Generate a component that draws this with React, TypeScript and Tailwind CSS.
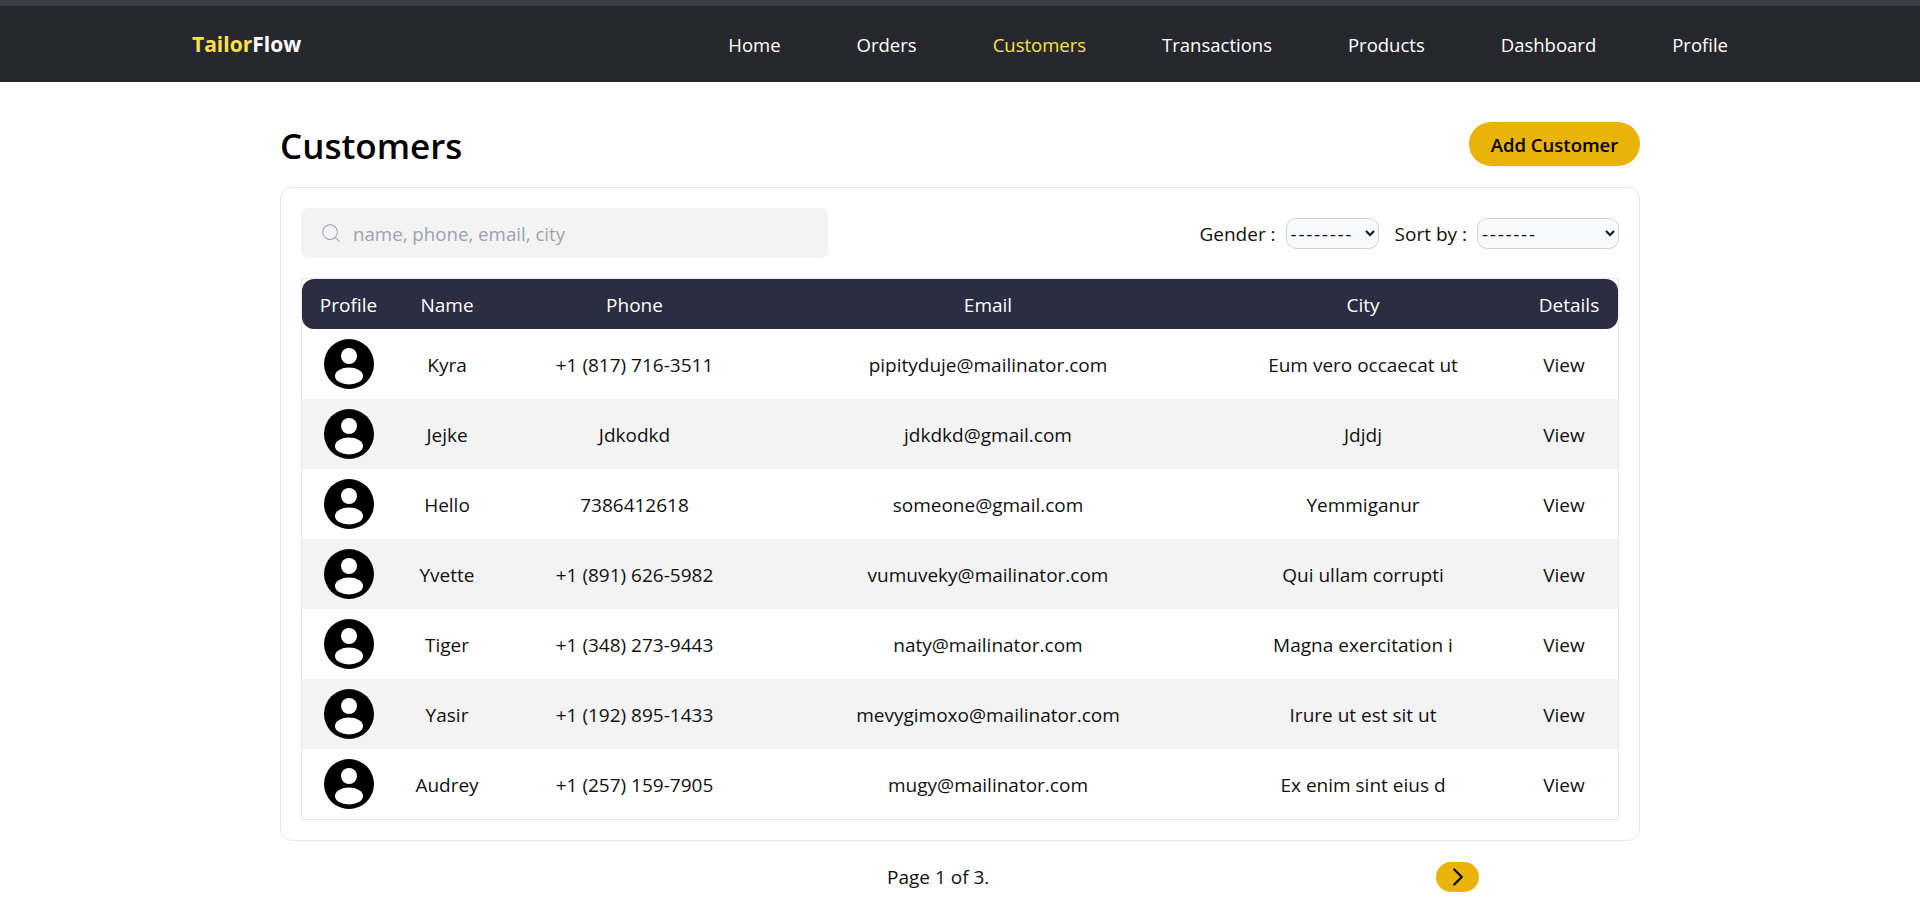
import { ChevronRight, Search } from 'lucide-react'

const NAV_LINKS = ['Home', 'Orders', 'Customers', 'Transactions', 'Products', 'Dashboard', 'Profile']

const CUSTOMERS = [
  { name: 'Kyra', phone: '+1 (817) 716-3511', email: 'pipityduje@mailinator.com', city: 'Eum vero occaecat ut' },
  { name: 'Jejke', phone: 'Jdkodkd', email: 'jdkdkd@gmail.com', city: 'Jdjdj' },
  { name: 'Hello', phone: '7386412618', email: 'someone@gmail.com', city: 'Yemmiganur' },
  { name: 'Yvette', phone: '+1 (891) 626-5982', email: 'vumuveky@mailinator.com', city: 'Qui ullam corrupti' },
  { name: 'Tiger', phone: '+1 (348) 273-9443', email: 'naty@mailinator.com', city: 'Magna exercitation i' },
  { name: 'Yasir', phone: '+1 (192) 895-1433', email: 'mevygimoxo@mailinator.com', city: 'Irure ut est sit ut' },
  { name: 'Audrey', phone: '+1 (257) 159-7905', email: 'mugy@mailinator.com', city: 'Ex enim sint eius d' },
]

function Avatar() {
  return (
    <svg viewBox="0 0 50 50" className="w-[50px] h-[50px] block mx-auto">
      <circle cx="25" cy="25" r="25" fill="#000" />
      <circle cx="25" cy="17" r="8" fill="#fff" />
      <ellipse cx="25" cy="37" rx="14" ry="8.5" fill="#fff" />
    </svg>
  )
}

export default function App() {
  return (
    <div className="min-h-[917px] bg-white text-[#111] font-['Open_Sans','Noto_Sans',sans-serif] overflow-hidden">
      {/* Header */}
      <div className="h-[6px] bg-[#3b3d47]" />
      <nav className="h-[76px] bg-[#27282d] flex items-center justify-between px-[192px]">
        <div className="text-[21px] font-bold mt-[2px]">
          <span className="text-[#fde047]">Tailor</span>
          <span className="text-white">Flow</span>
        </div>
        <div className="flex items-center gap-[76px] mt-[1px]">
          {NAV_LINKS.map((link) => (
            <span key={link} className={link === 'Customers' ? 'text-[18.5px] text-[#fde047]' : 'text-[18.5px] text-white'}>
              {link}
            </span>
          ))}
        </div>
      </nav>

      <main className="w-[1360px] mx-auto">
        {/* Title */}
        <div className="flex items-start justify-between pt-[40px] h-[105px]">
          <h1 className="text-[35px] font-semibold text-black leading-[44px] mt-[2px]">Customers</h1>
          <button className="w-[171px] h-[44px] pt-[2px] rounded-full bg-[#eab308] text-[18.5px] font-semibold text-black">
            Add Customer
          </button>
        </div>

        {/* Card */}
        <div className="border border-[#e5e7eb] rounded-xl p-[20px] h-[654px]">
          <div className="flex items-start justify-between h-[70px]">
            <div className="w-[527px] h-[50px] bg-[#f3f3f3] rounded-lg flex items-center gap-[11px] px-[19px]">
              <Search size={22} strokeWidth={1.1} className="text-[#9ca3af]" />
              <span className="text-[18.7px] text-[#9ca3af] pt-[2px]">name, phone, email, city</span>
            </div>
            <div className="flex items-center gap-[10px] mt-[10px] text-[19px]">
              <span className="pt-[2px]">Gender :</span>
              <select className="w-[93px] h-[31px] bg-[#f8f9fb] border border-[#d1d5db] rounded-[10px] text-[19px] tracking-[1.7px]">
                <option>--------</option>
              </select>
              <span className="ml-[6px] pt-[2px]">Sort by :</span>
              <select className="w-[142px] h-[31px] bg-[#f8f9fb] border border-[#d1d5db] rounded-[10px] text-[19px] tracking-[1.7px]">
                <option>-------</option>
              </select>
            </div>
          </div>

          {/* Table */}
          <div className="w-[1318px] border border-[#e5e7eb]">
            <table className="w-full table-fixed border-collapse text-[19px]">
              <thead>
                <tr className="h-[50px] text-white font-normal">
                  <th className="w-[93px] pt-[2px] bg-[#2b2d42] rounded-tl-xl rounded-bl-xl font-normal">Profile</th>
                  <th className="w-[102px] pt-[2px] pl-[2px] bg-[#2b2d42] font-normal">Name</th>
                  <th className="w-[273px] pt-[2px] pl-[2px] bg-[#2b2d42] font-normal">Phone</th>
                  <th className="w-[436px] pt-[2px] bg-[#2b2d42] font-normal">Email</th>
                  <th className="w-[314px] pt-[2px] bg-[#2b2d42] font-normal">City</th>
                  <th className="pt-[2px] bg-[#2b2d42] rounded-tr-xl rounded-br-xl font-normal">Details</th>
                </tr>
              </thead>
              <tbody>
                {CUSTOMERS.map((c, i) => (
                  <tr key={c.email} className={i % 2 === 1 ? 'h-[70px] bg-[#f3f3f3]' : 'h-[70px] bg-white'}>
                    <td><Avatar /></td>
                    <td className="text-center pt-[2px] pl-[2px]">{c.name}</td>
                    <td className="text-center pt-[2px] pl-[2px]">{c.phone}</td>
                    <td className="text-center pt-[2px]">{c.email}</td>
                    <td className="text-center pt-[2px]">{c.city}</td>
                    <td className="text-center pt-[2px] pr-[10px]">View</td>
                  </tr>
                ))}
              </tbody>
            </table>
          </div>
        </div>

        {/* Pagination */}
        <div className="flex items-center justify-between pl-[607px] pr-[161px] pt-[21px] text-[19px]">
          <span>Page 1 of 3.</span>
          <button className="w-[43px] h-[30px] rounded-full bg-[#eab308] flex items-center justify-center">
            <ChevronRight size={30} strokeWidth={1.75} className="text-black ml-[1px]" />
          </button>
        </div>
      </main>
    </div>
  )
}
